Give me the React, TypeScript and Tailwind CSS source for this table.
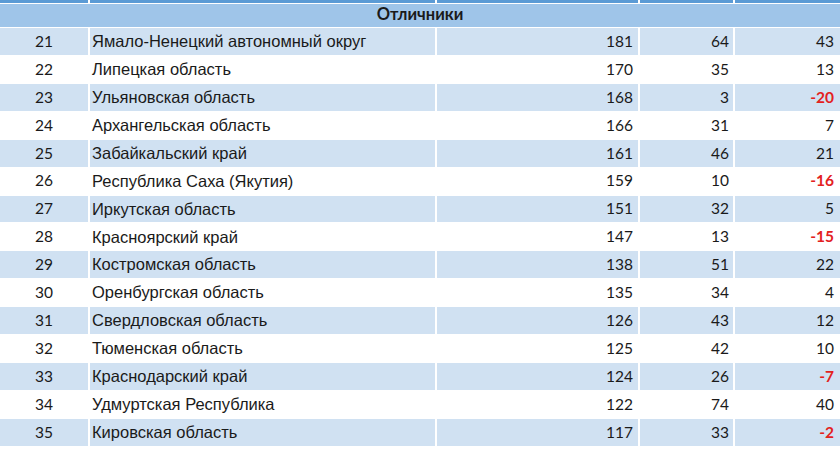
const rows = [
  { n: 21, name: "Ямало-Ненецкий автономный округ", a: 181, b: 64, c: 43 },
  { n: 22, name: "Липецкая область", a: 170, b: 35, c: 13 },
  { n: 23, name: "Ульяновская область", a: 168, b: 3, c: -20 },
  { n: 24, name: "Архангельская область", a: 166, b: 31, c: 7 },
  { n: 25, name: "Забайкальский край", a: 161, b: 46, c: 21 },
  { n: 26, name: "Республика Саха (Якутия)", a: 159, b: 10, c: -16 },
  { n: 27, name: "Иркутская область", a: 151, b: 32, c: 5 },
  { n: 28, name: "Красноярский край", a: 147, b: 13, c: -15 },
  { n: 29, name: "Костромская область", a: 138, b: 51, c: 22 },
  { n: 30, name: "Оренбургская область", a: 135, b: 34, c: 4 },
  { n: 31, name: "Свердловская область", a: 126, b: 43, c: 12 },
  { n: 32, name: "Тюменская область", a: 125, b: 42, c: 10 },
  { n: 33, name: "Краснодарский край", a: 124, b: 26, c: -7 },
  { n: 34, name: "Удмуртская Республика", a: 122, b: 74, c: 40 },
  { n: 35, name: "Кировская область", a: 117, b: 33, c: -2 },
]

const cols = "grid grid-cols-[88px_347px_203px_95px_1fr]"
const num = "font-['Lato','Liberation_Sans',sans-serif] text-[15.5px]"

const App = () => {
  return (
    <div className="h-[450px] w-[840px] overflow-hidden bg-white text-[#1a1a1a]">
      {/* top strip of the previous header row */}
      <div className={`${cols} h-[3px]`}>
        <div className="bg-[#5b9bd5]" />
        <div className="border-l-2 border-white bg-[#5b9bd5]" />
        <div className="border-l-2 border-white bg-[#5b9bd5]" />
        <div className="border-l-2 border-white bg-[#5b9bd5]" />
        <div className="border-l-2 border-white bg-[#5b9bd5]" />
      </div>
      <div className="mt-px flex h-[23px] items-center justify-center bg-[#9fc5e9] pb-[3px] font-['Lato','Liberation_Sans',sans-serif] text-[16.5px] font-bold">
        Отличники
      </div>
      {rows.map((r, i) => {
        const bg = i % 2 === 0 ? "bg-[#d0e1f2]" : "bg-white"
        return (
          <div key={r.n} className={`${cols} h-[27.93px] border-t border-white`}>
            <div className={`${bg} ${num} flex items-center justify-center`}>{r.n}</div>
            <div className={`${bg} flex items-center border-l-2 border-white pl-[2px] font-['Liberation_Sans',sans-serif] text-[16.5px]`}>
              {r.name}
            </div>
            <div className={`${bg} ${num} flex items-center justify-end border-l-2 border-white pr-[5px]`}>{r.a}</div>
            <div className={`${bg} ${num} flex items-center justify-end border-l-2 border-white pr-[4px]`}>{r.b}</div>
            <div
              className={`${bg} ${num} flex items-center justify-end border-l-2 border-white pr-[6px] ${
                r.c < 0 ? "font-bold text-[#e3211e]" : ""
              }`}
            >
              {r.c}
            </div>
          </div>
        )
      })}
      <div className={`${cols} h-[27.93px] border-t border-white`} />
    </div>
  )
}

export default App
